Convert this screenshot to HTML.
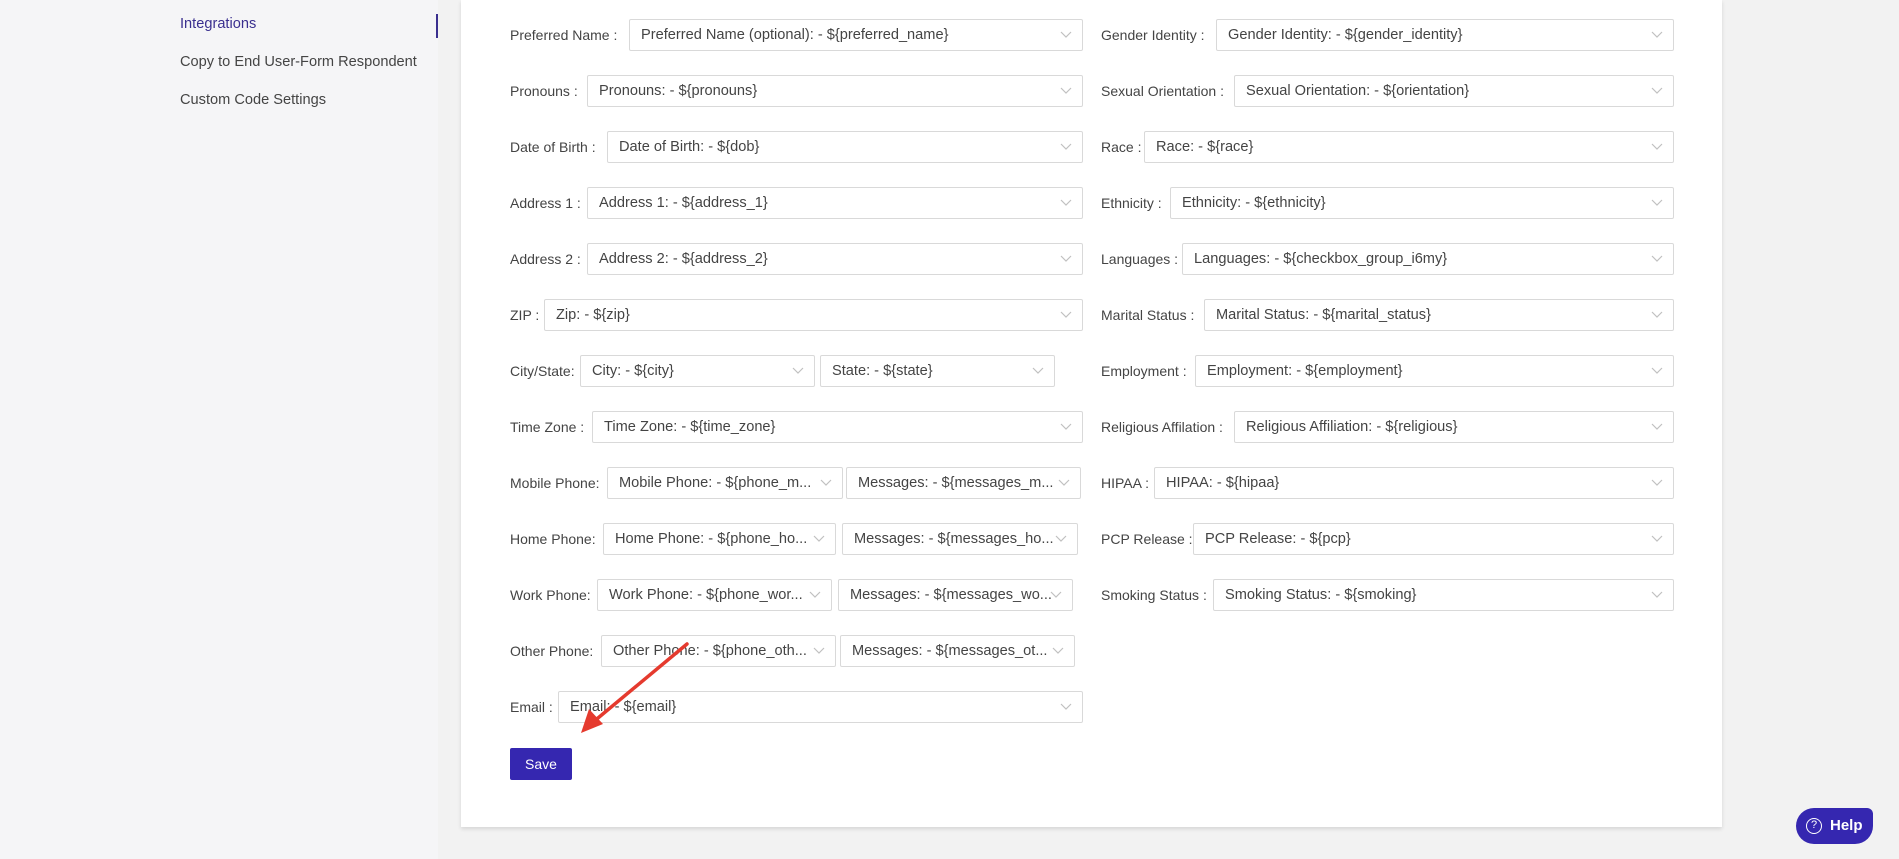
<!DOCTYPE html>
<html><head><meta charset="utf-8"><style>
*{box-sizing:border-box;margin:0;padding:0}
body{width:1899px;height:859px;background:#f2f2f2;font-family:"Liberation Sans",sans-serif;position:relative;overflow:hidden;color:#333}
.side{position:absolute;left:0;top:0;width:438px;height:859px;background:#f5f5f7}
.nav{position:absolute;left:180px;font-size:14.6px;color:#444}
.card{position:absolute;left:461px;top:0;width:1261px;height:827px;background:#fff;box-shadow:0 2px 4px rgba(0,0,0,.12)}
.l{position:absolute;font-size:14px;color:#444;line-height:32px;white-space:nowrap}
.i{position:absolute;height:32px;border:1px solid #d9d9d9;border-radius:2px;background:#fff;font-size:14.6px;color:#444;line-height:30px;padding-left:11px;white-space:nowrap;overflow:hidden}
.i svg{position:absolute;right:10px;top:11px}
</style></head><body>
<div class="side"></div>
<div class="nav" style="top:16px;color:#3a2f8f">Integrations</div>
<div style="position:absolute;left:436px;top:14px;width:2px;height:24px;background:#3a2f8f"></div>
<div class="nav" style="top:54px">Copy to End User-Form Respondent</div>
<div class="nav" style="top:92px">Custom Code Settings</div>
<div class="card"></div>
<div id="f"></div>
<script>
const chev='<svg width="12" height="8" viewBox="0 0 12 8"><path d="M1 1l5 5 5-5" fill="none" stroke="#c0c0c0" stroke-width="1.2"/></svg>';
const rows=[
[[510,'Preferred Name :',[[629,1083,'Preferred Name (optional): - ${preferred_name}']]],[1101,'Gender Identity :',[[1216,1674,'Gender Identity: - ${gender_identity}']]]],
[[510,'Pronouns :',[[587,1083,'Pronouns: - ${pronouns}']]],[1101,'Sexual Orientation :',[[1234,1674,'Sexual Orientation: - ${orientation}']]]],
[[510,'Date of Birth :',[[607,1083,'Date of Birth: - ${dob}']]],[1101,'Race :',[[1144,1674,'Race: - ${race}']]]],
[[510,'Address 1 :',[[587,1083,'Address 1: - ${address_1}']]],[1101,'Ethnicity :',[[1170,1674,'Ethnicity: - ${ethnicity}']]]],
[[510,'Address 2 :',[[587,1083,'Address 2: - ${address_2}']]],[1101,'Languages :',[[1182,1674,'Languages: - ${checkbox_group_i6my}']]]],
[[510,'ZIP :',[[544,1083,'Zip: - ${zip}']]],[1101,'Marital Status :',[[1204,1674,'Marital Status: - ${marital_status}']]]],
[[510,'City/State:',[[580,815,'City: - ${city}'],[820,1055,'State: - ${state}']]],[1101,'Employment :',[[1195,1674,'Employment: - ${employment}']]]],
[[510,'Time Zone :',[[592,1083,'Time Zone: - ${time_zone}']]],[1101,'Religious Affilation :',[[1234,1674,'Religious Affiliation: - ${religious}']]]],
[[510,'Mobile Phone:',[[607,843,'Mobile Phone: - ${phone_m...'],[846,1081,'Messages: - ${messages_m...']]],[1101,'HIPAA :',[[1154,1674,'HIPAA: - ${hipaa}']]]],
[[510,'Home Phone:',[[603,836,'Home Phone: - ${phone_ho...'],[842,1078,'Messages: - ${messages_ho...']]],[1101,'PCP Release :',[[1193,1674,'PCP Release: - ${pcp}']]]],
[[510,'Work Phone:',[[597,832,'Work Phone: - ${phone_wor...'],[838,1073,'Messages: - ${messages_wo...']]],[1101,'Smoking Status :',[[1213,1674,'Smoking Status: - ${smoking}']]]],
[[510,'Other Phone:',[[601,836,'Other Phone: - ${phone_oth...'],[840,1075,'Messages: - ${messages_ot...']]]],
[[510,'Email :',[[558,1083,'Email: - ${email}']]]]
];
let h='';
rows.forEach((r,i)=>{const t=19+56*i;r.forEach(c=>{h+=`<div class="l" style="left:${c[0]}px;top:${t}px">${c[1]}</div>`;c[2].forEach(b=>{h+=`<div class="i" style="left:${b[0]}px;top:${t}px;width:${b[1]-b[0]}px">${b[2]}${chev}</div>`})})});
document.getElementById('f').innerHTML=h;
</script>
<div style="position:absolute;left:510px;top:748px;width:62px;height:32px;background:#3527b0;border-radius:2px;color:#fff;font-size:14px;line-height:32px;text-align:center">Save</div>
<svg style="position:absolute;left:0;top:0" width="1899" height="859"><path d="M687 644L592 723" stroke="#e53a2e" stroke-width="3.5" stroke-linecap="round"/><path d="M581 733l8-24 14 15z" fill="#e53a2e"/></svg>
<div style="position:absolute;left:1796px;top:808px;width:77px;height:36px;background:#3527b0;border-radius:18px 6px 18px 18px;color:#fff;font-weight:bold;font-size:15px;line-height:36px;padding-left:34px">Help</div>
<div style="position:absolute;left:1806px;top:818px;width:16px;height:16px;border:1.5px solid #fff;border-radius:50%;color:#fff;font-size:11px;line-height:13px;text-align:center">?</div>
</body></html>
